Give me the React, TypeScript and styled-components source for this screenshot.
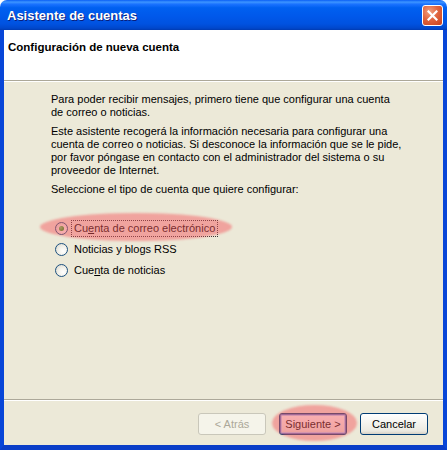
import React from "react";
import styled, { createGlobalStyle } from "styled-components";

const GlobalStyle = createGlobalStyle`
	html, body {
		margin: 0;
		padding: 0;
		background: #ffffff;
	}
	body {
		font-family: "Liberation Sans", Arial, sans-serif;
		font-size: 11px;
		color: #000000;
	}
`;

const Window = styled.div`
	width: 447px;
	height: 450px;
	display: flex;
	flex-direction: column;
	position: relative;
	overflow: hidden;
`;

const TitleBar = styled.div`
	flex: 0 0 30px;
	display: flex;
	align-items: center;
	justify-content: space-between;
	padding: 0 4px 0 7px;
	border-radius: 7px 7px 0 0;
	background: linear-gradient(
		to bottom,
		#0a5ff5 0%,
		#3d95ff 7%,
		#1a72ff 14%,
		#0060f0 26%,
		#0058ea 55%,
		#0052e0 80%,
		#0047cc 94%,
		#003bb2 100%
	);
`;

const TitleText = styled.span`
	font-family: "Liberation Sans", Arial, sans-serif;
	font-weight: bold;
	font-size: 13px;
	color: #ffffff;
	text-shadow: 1px 1px 0 #0a1e7a;
	padding-top: 1px;
`;

const CloseButton = styled.div`
	width: 19px;
	height: 19px;
	border: 1px solid #ffffff;
	border-radius: 3px;
	background: radial-gradient(circle at 35% 30%, #f0a080 0%, #e0653f 45%, #c8401c 100%);
	display: flex;
	align-items: center;
	justify-content: center;
	margin-top: 1px;
`;

const Client = styled.div`
	flex: 1;
	display: flex;
	flex-direction: column;
	border-left: 4px solid #0846d8;
	border-right: 4px solid #0846d8;
	border-bottom: 5px solid #0a3ec8;
	background: #ece9d8;
`;

const Header = styled.div`
	flex: 0 0 51px;
	box-sizing: border-box;
	background: #ffffff;
	padding: 10px 4px 0 4px;
	border-bottom: 1px solid #aca899;
	font-weight: bold;
	font-size: 11.5px;
	line-height: 14px;
`;

const Body = styled.div`
	flex: 1;
	display: flex;
	flex-direction: column;
	padding: 11px 0 0 47px;
	border-top: 1px solid #ffffff;
`;

const Paragraph = styled.p`
	margin: 0 0 6px 0;
	white-space: nowrap;
	line-height: 13px;
`;

const RadioList = styled.div`
	display: flex;
	flex-direction: column;
	gap: 1px;
	margin-top: 16px;
	padding-left: 4px;
`;

const RadioRow = styled.label`
	display: flex;
	align-items: center;
	gap: 3px;
	height: 20px;
`;

const RadioCircle = styled.span<{ $checked?: boolean }>`
	width: 11px;
	height: 11px;
	border: 1px solid #1c5180;
	border-radius: 50%;
	background: radial-gradient(circle at 65% 65%, #ffffff 0%, #f2f1ea 45%, #d4d2c6 100%);
	display: flex;
	align-items: center;
	justify-content: center;

	&::after {
		content: "";
		display: ${(p) => (p.$checked ? "block" : "none")};
		width: 5px;
		height: 5px;
		border-radius: 50%;
		background: radial-gradient(circle at 35% 35%, #6ecf6e 0%, #21a121 60%, #1a7e1a 100%);
	}
`;

const RadioLabel = styled.span<{ $focused?: boolean }>`
	padding: 1px 2px;
	border: 1px dotted ${(p) => (p.$focused ? "#333333" : "transparent")};
	line-height: 13px;
`;

const Footer = styled.div`
	flex: 0 0 46px;
	box-sizing: border-box;
	border-top: 1px solid #aca899;
	box-shadow: inset 0 1px 0 #ffffff;
	display: flex;
	justify-content: flex-end;
	align-items: flex-start;
	gap: 13px;
	padding: 13px 15px 0 0;
`;

const Button = styled.button<{ $default?: boolean }>`
	width: 68px;
	height: 22px;
	box-sizing: border-box;
	font-family: "Liberation Sans", Arial, sans-serif;
	font-size: 11px;
	color: #000000;
	border: 1px solid #003c74;
	border-radius: 3px;
	background: linear-gradient(to bottom, #ffffff 0%, #f6f5f0 40%, #ebe9e0 85%, #d6d0c5 100%);
	box-shadow: ${(p) => (p.$default ? "inset 0 0 0 1px #5a78c8, inset 0 0 0 2px #b8cff5" : "none")};
	padding: 0;

	&:disabled {
		color: #aca899;
		border-color: #c9c7ba;
		background: #f5f4ea;
	}
`;

const Highlight = styled.div<{ $x: number; $y: number; $w: number; $h: number }>`
	position: absolute;
	left: ${(p) => p.$x}px;
	top: ${(p) => p.$y}px;
	width: ${(p) => p.$w}px;
	height: ${(p) => p.$h}px;
	border-radius: 50%;
	background: rgba(244, 88, 94, 0.48);
	filter: blur(1px);
	pointer-events: none;
`;

function CloseIcon() {
	return (
		<svg width="11" height="11" viewBox="0 0 11 11">
			<path d="M1.5 1.5 L9.5 9.5 M9.5 1.5 L1.5 9.5" stroke="#ffffff" strokeWidth="2.2" strokeLinecap="square" />
		</svg>
	);
}

export default function App() {
	return (
		<>
			<GlobalStyle />
			<Window>
				<TitleBar>
					<TitleText>Asistente de cuentas</TitleText>
					<CloseButton>
						<CloseIcon />
					</CloseButton>
				</TitleBar>
				<Client>
					<Header>Configuración de nueva cuenta</Header>
					<Body>
						<Paragraph>
							Para poder recibir mensajes, primero tiene que configurar una cuenta
							<br />
							de correo o noticias.
						</Paragraph>
						<Paragraph>
							Este asistente recogerá la información necesaria para configurar una
							<br />
							cuenta de correo o noticias. Si desconoce la información que se le pide,
							<br />
							por favor póngase en contacto con el administrador del sistema o su
							<br />
							proveedor de Internet.
						</Paragraph>
						<Paragraph>Seleccione el tipo de cuenta que quiere configurar:</Paragraph>
						<RadioList>
							<RadioRow>
								<RadioCircle $checked />
								<RadioLabel $focused>
									Cu<u>e</u>nta de correo electrónico
								</RadioLabel>
							</RadioRow>
							<RadioRow>
								<RadioCircle />
								<RadioLabel>Noticias y blogs RSS</RadioLabel>
							</RadioRow>
							<RadioRow>
								<RadioCircle />
								<RadioLabel>
									Cue<u>n</u>ta de noticias
								</RadioLabel>
							</RadioRow>
						</RadioList>
					</Body>
					<Footer>
						<Button disabled>&lt; Atrás</Button>
						<Button $default>Siguiente &gt;</Button>
						<Button>Cancelar</Button>
					</Footer>
				</Client>
				<Highlight $x={40} $y={213} $w={192} $h={28} />
				<Highlight $x={272} $y={405} $w={85} $h={36} />
			</Window>
		</>
	);
}
